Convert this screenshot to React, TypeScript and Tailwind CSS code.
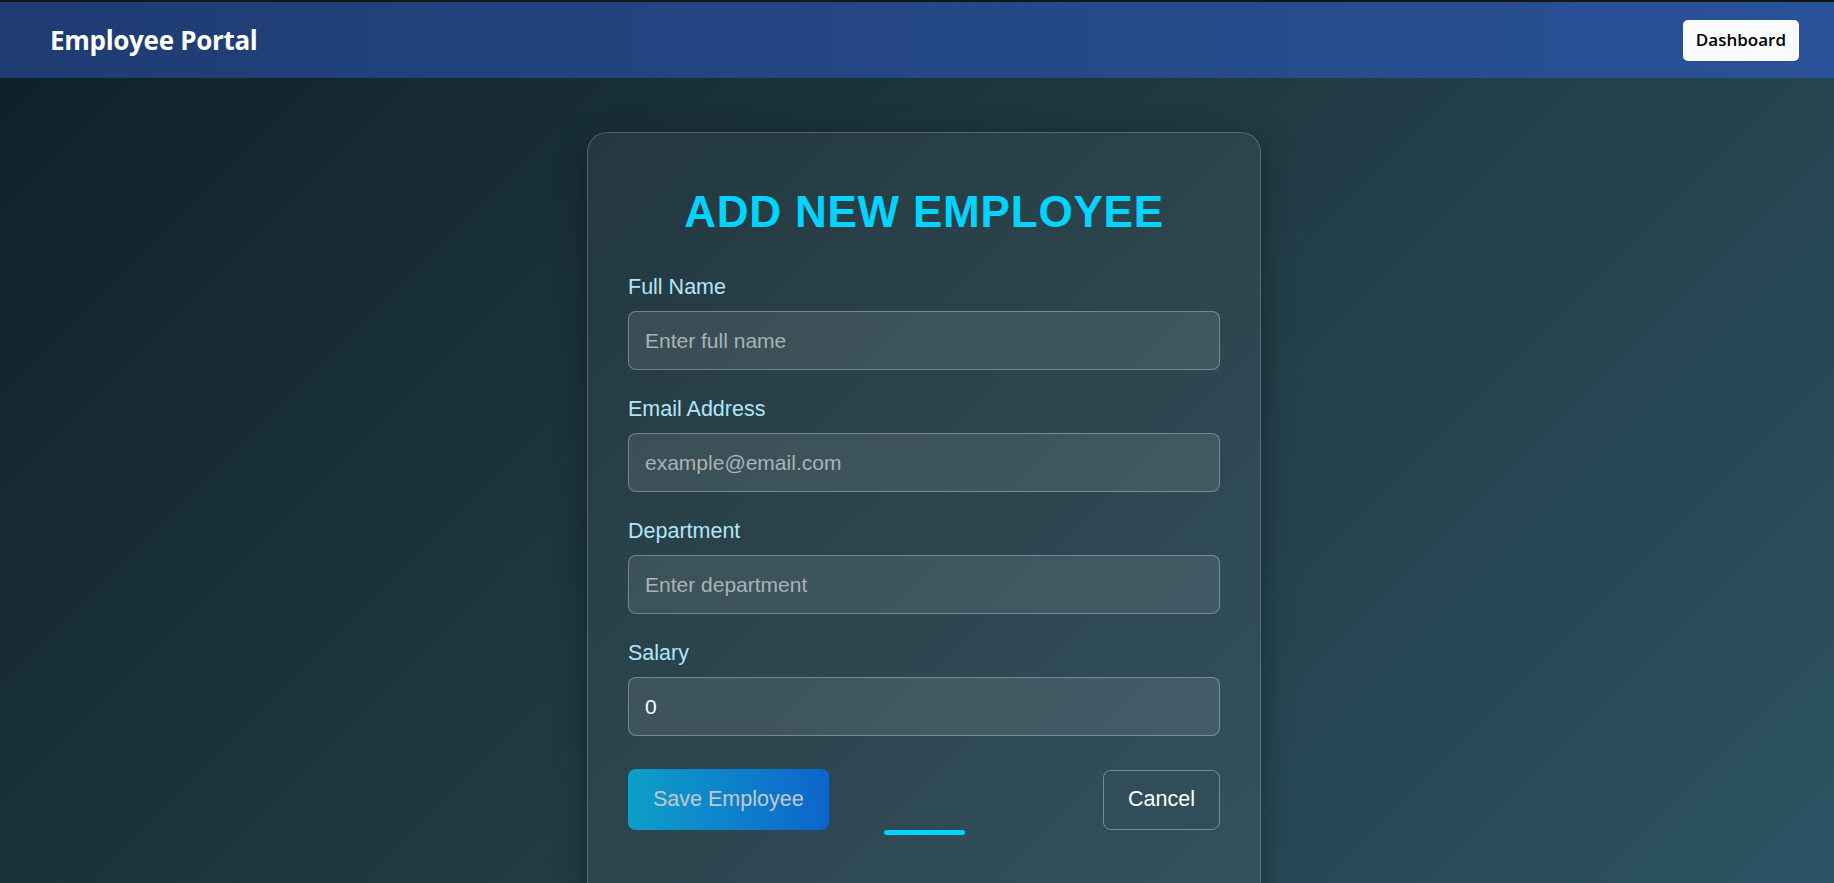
import React from "react";

export default function App() {
  const arial = { fontFamily: '"Liberation Sans", Arial, sans-serif' };
  const fields = [
    { label: "Full Name", placeholder: "Enter full name", value: "" },
    { label: "Email Address", placeholder: "example@email.com", value: "" },
    { label: "Department", placeholder: "Enter department", value: "" },
    { label: "Salary", placeholder: "", value: "0" },
  ];
  return (
    <div className="h-screen overflow-hidden flex flex-col bg-[linear-gradient(135deg,#0f2027,#203a43,#2c5364)]">
      <div className="h-[2px] bg-[#161616] shrink-0" />
      <header
        className="h-[76px] shrink-0 flex items-center justify-between pl-[50px] pr-[35px] bg-[linear-gradient(90deg,#1e3c72,#2a5298)]"
        style={{ fontFamily: '"Open Sans", "Noto Sans", sans-serif' }}
      >
        <span className="text-white font-bold text-[26px] tracking-[-0.3px]">Employee Portal</span>
        <button className="h-[41px] px-[13px] rounded-[5px] bg-[#f8fafc] text-black font-semibold text-[17px]">
          Dashboard
        </button>
      </header>
      <main className="flex justify-center pl-[14px] pt-[54px]" style={arial}>
        <div className="w-[674px] shrink-0 rounded-[20px] border border-white/20 bg-white/[0.05] shadow-[0_8px_32px_rgba(0,0,0,0.35)] px-10 pt-[53px] pb-[80px]">
          <h2 className="text-center text-[44px] leading-[51px] font-bold tracking-[0.8px] text-[#00d4ff] mb-[38px]">
            ADD NEW EMPLOYEE
          </h2>
          <div className="flex flex-col gap-[27px]">
            {fields.map((f) => (
              <div key={f.label}>
                <label className="block text-[21.5px] leading-[24px] text-[#b3e5fc] mb-3">{f.label}</label>
                <input
                  readOnly
                  placeholder={f.placeholder}
                  value={f.value}
                  className="w-full h-[59px] px-4 rounded-[8px] border border-white/30 bg-white/[0.09] text-[21px] text-white placeholder:text-[#a9b3b6] outline-none"
                />
              </div>
            ))}
          </div>
          <div className="flex justify-between items-center mt-[33px]">
            <button className="h-[61px] px-[25px] rounded-[8px] bg-[linear-gradient(90deg,#00c6ff,#0072ff)] text-white text-[21.5px] opacity-70">
              Save Employee
            </button>
            <button className="h-[60px] px-6 rounded-[8px] border border-white/35 bg-transparent text-white text-[21.5px]">
              Cancel
            </button>
          </div>
          <div className="mx-auto w-[81px] h-[5px] rounded-full bg-[#00d4ff]" />
        </div>
      </main>
    </div>
  );
}
